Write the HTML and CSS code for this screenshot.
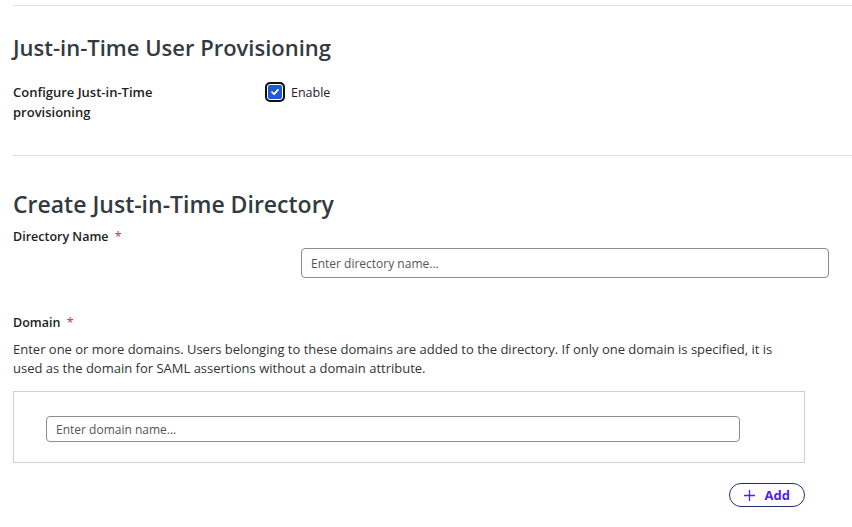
FILE: index.html
```html
<!DOCTYPE html>
<html lang="en">
<head>
    <meta charset="UTF-8">
    <title>Just-in-Time User Provisioning</title>
    <link rel="stylesheet" href="styles.css">
</head>
<body>
    <div class="page">
        <hr class="divider">
        <section class="section">
            <h2 class="section-title">Just-in-Time User Provisioning</h2>
            <div class="field-row">
                <label class="row-label" for="jitEnable">Configure Just-in-Time provisioning</label>
                <label class="check">
                    <span class="check-box">
                        <svg width="10" height="10" viewBox="0 0 10 10"><path d="M2 5.2 L4.1 7.2 L8 2.8" fill="none" stroke="#fff" stroke-width="1.8" stroke-linecap="round" stroke-linejoin="round"/></svg>
                    </span>
                    <span class="check-text">Enable</span>
                </label>
            </div>
        </section>
        <hr class="divider">
        <section class="section">
            <h2 class="section-title big">Create Just-in-Time Directory</h2>
            <div class="field-label">Directory Name <span class="req">*</span></div>
            <div class="dir-row">
                <input class="text-input" type="text" placeholder="Enter directory name...">
            </div>

            <div class="field-label domain-label">Domain <span class="req">*</span></div>
            <p class="help">Enter one or more domains. Users belonging to these domains are added to the directory. If only one domain is specified, it is used as the domain for SAML assertions without a domain attribute.</p>
            <div class="domain-box">
                <input class="text-input small" type="text" placeholder="Enter domain name...">
            </div>
            <div class="actions">
                <button class="btn-add">
                    <svg width="13" height="13" viewBox="0 0 13 13"><path d="M6.5 1 V12 M1 6.5 H12" stroke="#5420e6" stroke-width="1.3" fill="none"/></svg>
                    Add
                </button>
            </div>
        </section>
    </div>
</body>
</html>
```

FILE: styles.css
```css
/* General Reset */
body, html {
    margin: 0;
    padding: 0;
    background: #fff;
    font-family: 'Open Sans', 'Lato', sans-serif;
    color: #2f353b;
}

.page {
    padding: 5px 0 0 13px;
}

.divider {
    border: none;
    border-top: 1px solid #dedede;
    margin: 0;
}

.section-title {
    font-size: 22px;
    font-weight: 600;
    line-height: 28px;
    color: #333a41;
    margin: 27px 0 21px;
}

.section-title.big {
    font-size: 23px;
    margin: 34px 0 10px;
}

.field-row {
    display: flex;
    align-items: flex-start;
    margin-bottom: 33px;
}

.row-label {
    width: 160px;
    margin-right: 92px;
    font-size: 13px;
    font-weight: 600;
    line-height: 20px;
    color: #222;
}

.check {
    display: flex;
    align-items: center;
    gap: 6px;
    margin-top: 0;
}

.check-box {
    width: 16px;
    height: 16px;
    background: #1d5ad8;
    border: 2px solid #111;
    border-radius: 5px;
    display: flex;
    align-items: center;
    justify-content: center;
    box-shadow: inset 0 0 0 1px #fff;
}

.check-text {
    font-size: 12.5px;
    color: #2a1a2a;
}

.field-label {
    font-size: 12.5px;
    line-height: 18px;
    font-weight: 600;
    color: #1c1c1c;
}

.req {
    color: #c0333f;
    font-weight: 400;
    margin-left: 3px;
}

.dir-row {
    display: flex;
    justify-content: flex-end;
    padding-right: 23px;
    margin-top: 2px;
}

.text-input {
    width: 528px;
    height: 30px;
    box-sizing: border-box;
    border: 1px solid #8c8c8c;
    border-radius: 4px;
    padding: 0 9px;
    font-family: inherit;
    font-size: 12px;
    color: #333;
}

.text-input::placeholder {
    color: #555;
}

.text-input.small {
    width: 694px;
    height: 26px;
}

.domain-label {
    margin-top: 36px;
}

.help {
    font-size: 13px;
    line-height: 19px;
    color: #333;
    margin: 8px 0 13px;
    max-width: 790px;
}

.domain-box {
    width: 792px;
    height: 72px;
    box-sizing: border-box;
    border: 1px solid #cfcfcf;
    padding: 24px 0 0 32px;
}

.actions {
    width: 792px;
    display: flex;
    justify-content: flex-end;
    margin-top: 20px;
}

.btn-add {
    height: 24px;
    padding: 0 14px 0 13px;
    border: 1px solid #1c2f6e;
    border-radius: 12px;
    background: #fff;
    color: #5420e6;
    font-family: inherit;
    font-size: 13px;
    font-weight: 700;
    display: flex;
    align-items: center;
    gap: 9px;
}
```
